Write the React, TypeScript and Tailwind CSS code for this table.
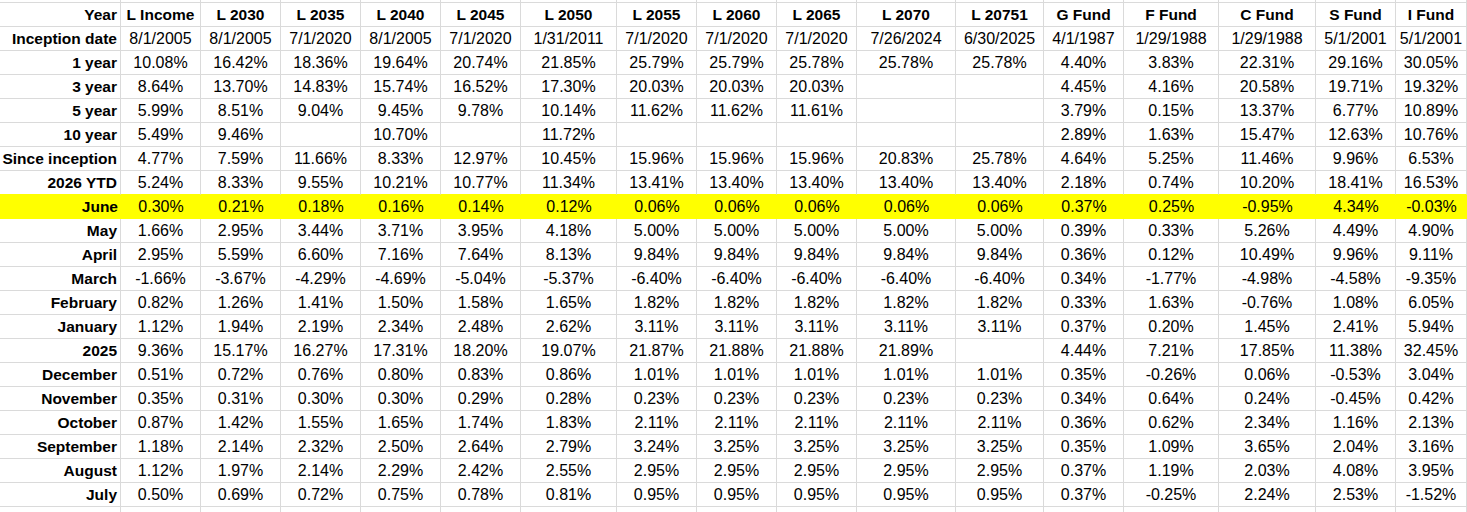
import React from "react";

const headers = ["Year","L Income","L 2030","L 2035","L 2040","L 2045","L 2050","L 2055","L 2060","L 2065","L 2070","L 20751","G Fund","F Fund","C Fund","S Fund","I Fund"];

const rows: [string, string[]][] = [
  ["Inception date", ["8/1/2005","8/1/2005","7/1/2020","8/1/2005","7/1/2020","1/31/2011","7/1/2020","7/1/2020","7/1/2020","7/26/2024","6/30/2025","4/1/1987","1/29/1988","1/29/1988","5/1/2001","5/1/2001"]],
  ["1 year", ["10.08%","16.42%","18.36%","19.64%","20.74%","21.85%","25.79%","25.79%","25.78%","25.78%","25.78%","4.40%","3.83%","22.31%","29.16%","30.05%"]],
  ["3 year", ["8.64%","13.70%","14.83%","15.74%","16.52%","17.30%","20.03%","20.03%","20.03%","","","4.45%","4.16%","20.58%","19.71%","19.32%"]],
  ["5 year", ["5.99%","8.51%","9.04%","9.45%","9.78%","10.14%","11.62%","11.62%","11.61%","","","3.79%","0.15%","13.37%","6.77%","10.89%"]],
  ["10 year", ["5.49%","9.46%","","10.70%","","11.72%","","","","","","2.89%","1.63%","15.47%","12.63%","10.76%"]],
  ["Since inception", ["4.77%","7.59%","11.66%","8.33%","12.97%","10.45%","15.96%","15.96%","15.96%","20.83%","25.78%","4.64%","5.25%","11.46%","9.96%","6.53%"]],
  ["2026 YTD", ["5.24%","8.33%","9.55%","10.21%","10.77%","11.34%","13.41%","13.40%","13.40%","13.40%","13.40%","2.18%","0.74%","10.20%","18.41%","16.53%"]],
  ["June", ["0.30%","0.21%","0.18%","0.16%","0.14%","0.12%","0.06%","0.06%","0.06%","0.06%","0.06%","0.37%","0.25%","-0.95%","4.34%","-0.03%"]],
  ["May", ["1.66%","2.95%","3.44%","3.71%","3.95%","4.18%","5.00%","5.00%","5.00%","5.00%","5.00%","0.39%","0.33%","5.26%","4.49%","4.90%"]],
  ["April", ["2.95%","5.59%","6.60%","7.16%","7.64%","8.13%","9.84%","9.84%","9.84%","9.84%","9.84%","0.36%","0.12%","10.49%","9.96%","9.11%"]],
  ["March", ["-1.66%","-3.67%","-4.29%","-4.69%","-5.04%","-5.37%","-6.40%","-6.40%","-6.40%","-6.40%","-6.40%","0.34%","-1.77%","-4.98%","-4.58%","-9.35%"]],
  ["February", ["0.82%","1.26%","1.41%","1.50%","1.58%","1.65%","1.82%","1.82%","1.82%","1.82%","1.82%","0.33%","1.63%","-0.76%","1.08%","6.05%"]],
  ["January", ["1.12%","1.94%","2.19%","2.34%","2.48%","2.62%","3.11%","3.11%","3.11%","3.11%","3.11%","0.37%","0.20%","1.45%","2.41%","5.94%"]],
  ["2025", ["9.36%","15.17%","16.27%","17.31%","18.20%","19.07%","21.87%","21.88%","21.88%","21.89%","","4.44%","7.21%","17.85%","11.38%","32.45%"]],
  ["December", ["0.51%","0.72%","0.76%","0.80%","0.83%","0.86%","1.01%","1.01%","1.01%","1.01%","1.01%","0.35%","-0.26%","0.06%","-0.53%","3.04%"]],
  ["November", ["0.35%","0.31%","0.30%","0.30%","0.29%","0.28%","0.23%","0.23%","0.23%","0.23%","0.23%","0.34%","0.64%","0.24%","-0.45%","0.42%"]],
  ["October", ["0.87%","1.42%","1.55%","1.65%","1.74%","1.83%","2.11%","2.11%","2.11%","2.11%","2.11%","0.36%","0.62%","2.34%","1.16%","2.13%"]],
  ["September", ["1.18%","2.14%","2.32%","2.50%","2.64%","2.79%","3.24%","3.25%","3.25%","3.25%","3.25%","0.35%","1.09%","3.65%","2.04%","3.16%"]],
  ["August", ["1.12%","1.97%","2.14%","2.29%","2.42%","2.55%","2.95%","2.95%","2.95%","2.95%","2.95%","0.37%","1.19%","2.03%","4.08%","3.95%"]],
  ["July", ["0.50%","0.69%","0.72%","0.75%","0.78%","0.81%","0.95%","0.95%","0.95%","0.95%","0.95%","0.37%","-0.25%","2.24%","2.53%","-1.52%"]],
];

const font = { fontFamily: '"Liberation Sans", Arial, sans-serif' };

export default function App() {
  return (
    <div className="w-[1467px] h-[512px] overflow-hidden bg-white text-black" style={font}>
      <div className="grid grid-cols-[121px_80px_80px_80px_80px_80px_96px_80px_80px_80px_99px_88px_80px_95px_97px_80px_71px]">
        {headers.map((_, i) => (
          <div key={"t" + i} className="h-[3px] border-r border-b border-[#dadada]" />
        ))}
        {headers.map((h, i) => (
          <div
            key={"h" + i}
            className={
              "h-[24px] border-r border-b border-[#dadada] flex items-center font-bold text-[15.5px] leading-none whitespace-nowrap " +
              (i === 0 ? "justify-end pr-[3px]" : "justify-center")
            }
          >
            {h}
          </div>
        ))}
        {rows.map(([label, vals], ri) => {
          const yellow = label === "June";
          const beforeYellow = label === "2026 YTD";
          const rowCls = yellow
            ? "bg-[#ffff00] border-b border-[#ffff00]"
            : beforeYellow
            ? "border-r border-b border-r-[#dadada] border-b-[#ffff00]"
            : "border-r border-b border-[#dadada]";
          return (
            <React.Fragment key={"r" + ri}>
              <div
                className={
                  "h-[24px] flex items-center justify-end pr-[3px] font-bold text-[15.5px] leading-none whitespace-nowrap " +
                  rowCls
                }
              >
                {label}
              </div>
              {vals.map((v, ci) => (
                <div
                  key={ci}
                  className={
                    "h-[24px] flex items-center justify-center text-[16px] leading-none whitespace-nowrap " +
                    rowCls
                  }
                >
                  {v}
                </div>
              ))}
            </React.Fragment>
          );
        })}
        {headers.map((_, i) => (
          <div key={"b" + i} className="h-[6px] border-r border-[#dadada]" />
        ))}
      </div>
    </div>
  );
}
